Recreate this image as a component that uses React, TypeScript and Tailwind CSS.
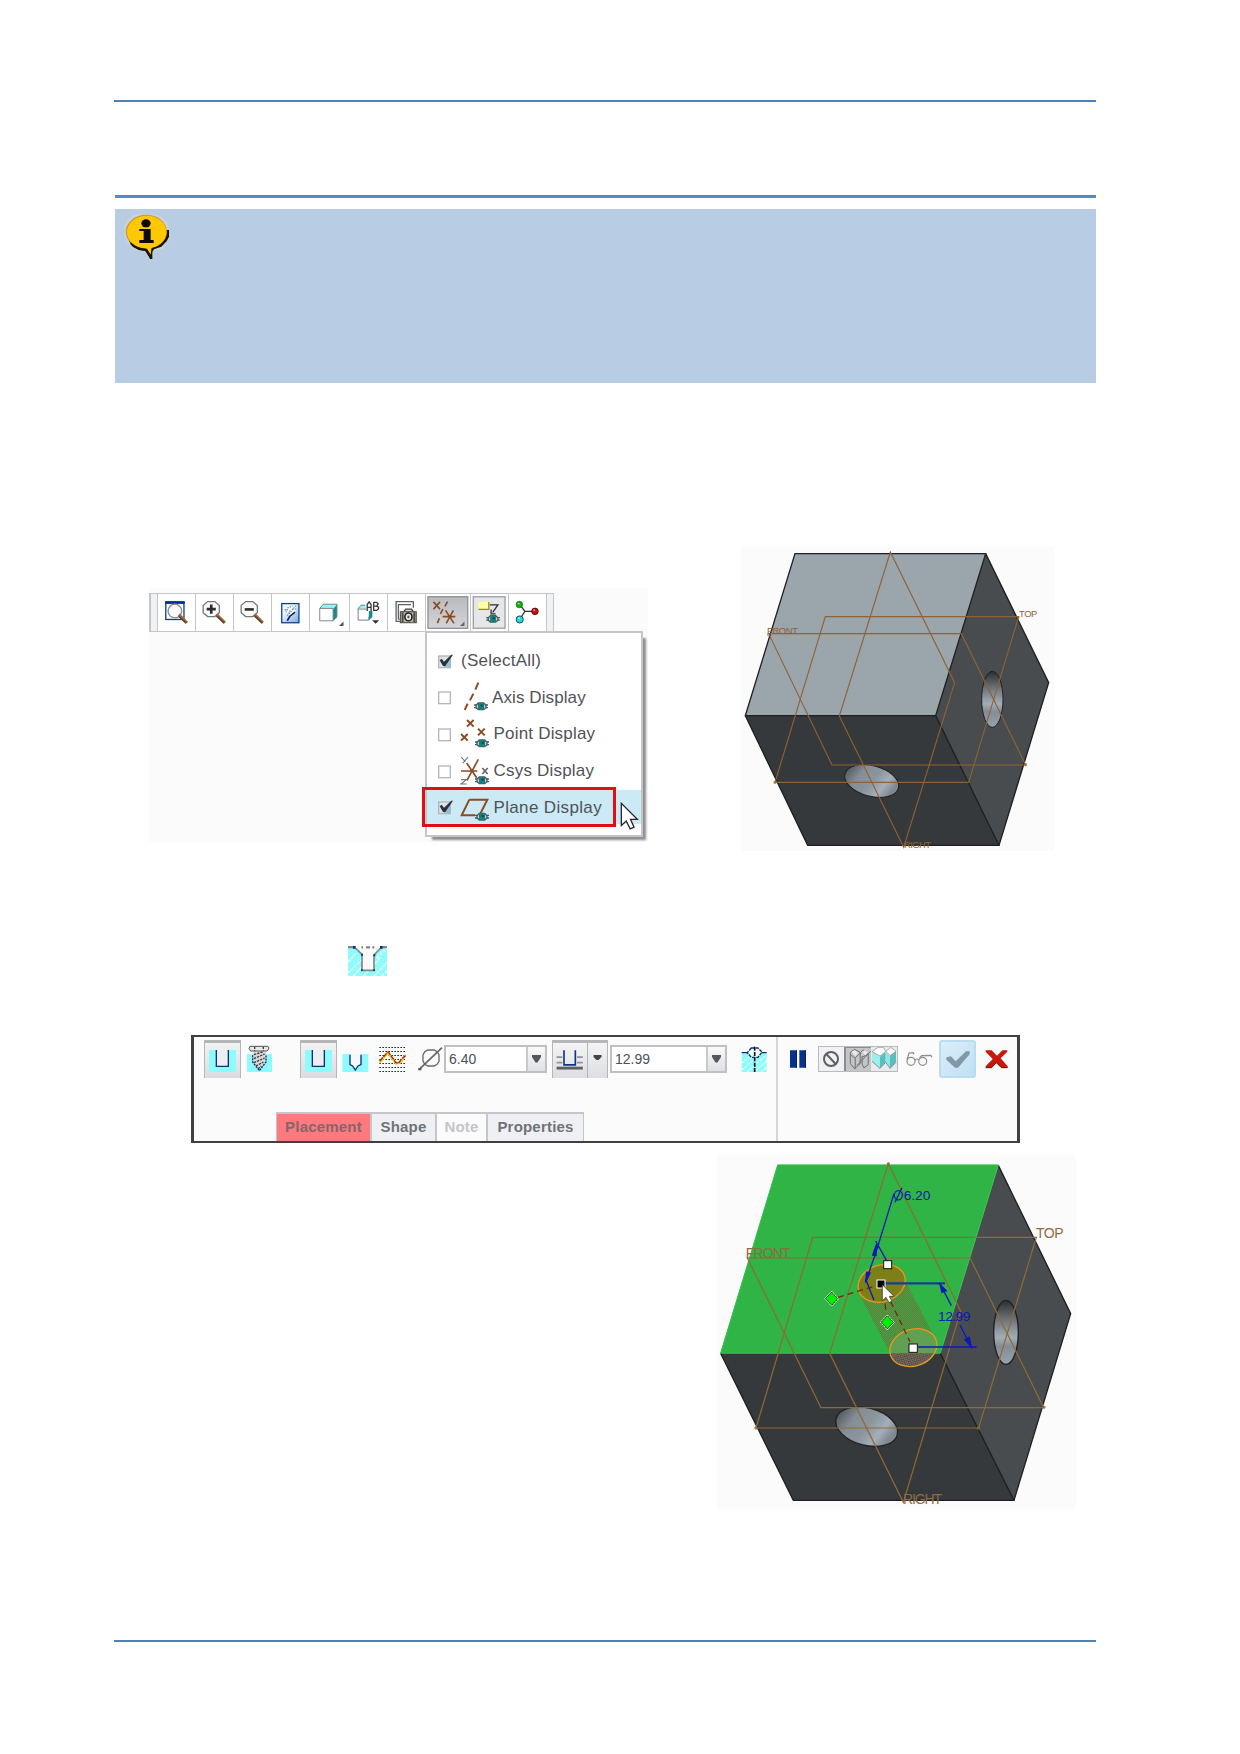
import React from "react";

const SANS = "font-['Liberation_Sans',Arial,sans-serif]";

function Glyph({ w, h, vb, className = "", children }: { w: number; h: number; vb: string; className?: string; children: React.ReactNode }) {
  return (
    <svg width={w} height={h} viewBox={vb} className={`block shrink-0 ${className}`} fill="none">
      {children}
    </svg>
  );
}

function Eye({ x, y }: { x: number; y: number }) {
  return (
    <g transform={`translate(${x} ${y})`}>
      <path d="M-21 -4h6M-21 4h6M15 -4h6M15 4h6" stroke="#555" strokeWidth="4" />
      <path d="M-15 -3L-8 -10H8L15 -3V4L8 10H-8L-15 4Z" fill="#c3cccc" stroke="#4a5555" strokeWidth="4" />
      <rect x="-9" y="-10" width="18" height="20" fill="#158080" />
      <rect x="-1" y="-5" width="6" height="6" fill="#0b3f48" />
    </g>
  );
}

function Cursor({ x, y, s = 1 }: { x: number; y: number; s?: number }) {
  return (
    <path
      transform={`translate(${x} ${y}) scale(${s})`}
      d="M0 0V68L15 54L27 78L39 73L28 49H49Z"
      fill="#fff"
      stroke="#26262e"
      strokeWidth="4"
    />
  );
}

function InfoIcon() {
  return (
    <Glyph w={48} h={48} vb="69 399 144 144">
      <path d="M100 406L120 401H158L182 408L203 428L207 450V480L190 506L158 516L154 537H148L140 518L108 511L85 492L73 466V438L84 418Z" fill="#d8d6cc" opacity="0.6" />
      <path d="M203 450H207V470L200 484L184 500L162 508L157 516V537H150L147 524L138 514L116 510L98 500L86 482L140 480L198 450Z" fill="#16140a" />
      <ellipse cx="139" cy="455" rx="62" ry="51" fill="#c09a4a" />
      <ellipse cx="140" cy="456" rx="59" ry="49" fill="#ffc800" />
      <path d="M136 498L152 524L155 500Z" fill="#ffc800" />
      <path d="M92 490Q112 508 136 509L152 534" stroke="#171405" strokeWidth="5" />
      <ellipse cx="138" cy="430" rx="14" ry="12" fill="#0c0a02" />
      <path d="M118 447H152V480H161V489H118V480H131V453H118Z" fill="#0c0a02" />
    </Glyph>
  );
}

function Magnifier({ cx, children }: { cx: number; children?: React.ReactNode }) {
  return (
    <g>
      <path d={`M${cx - 11} 65H${cx + 11}L${cx + 25} 77V99L${cx + 11} 111H${cx - 11}L${cx - 25} 99V77Z`} fill="#fafafa" stroke="#777" strokeWidth="4" />
      {children}
      <path d={`M${cx + 16} 104L${cx + 42} 130`} stroke="#9b6a48" strokeWidth="9" />
      <path d={`M${cx + 16} 109L${cx + 40} 131`} stroke="#6d3c24" strokeWidth="5" />
    </g>
  );
}

const CELL = "border-l border-[#c3c5c9] h-[39px] shrink-0";

function ViewToolbar() {
  return (
    <div className="flex w-[405px] h-[39px] bg-white border-y border-[#c3c5c9] items-center">
      <div className="w-[8.2px] h-full border-l-2 border-[#c3c5c9] bg-[#f0f1f3]" />
      <Glyph w={38} h={39} vb="53 40 114 117" className={CELL}>
        <rect x="77" y="66" width="56" height="54" fill="#fff" stroke="#093a8c" strokeWidth="4" />
        <rect x="75" y="64" width="60" height="8" fill="#06307c" />
        <ellipse cx="105" cy="94" rx="21" ry="21" fill="#fafafa" stroke="#8a8a8a" strokeWidth="4" />
        <path d="M117 105L142 130" stroke="#9b6a48" strokeWidth="9" />
        <path d="M117 110L140 131" stroke="#6d3c24" strokeWidth="5" />
      </Glyph>
      <Glyph w={38} h={39} vb="167 40 114 117" className={CELL}>
        <Magnifier cx={214}>
          <path d="M200 88H228M214 74V102" stroke="#2b2b2b" strokeWidth="8" />
        </Magnifier>
      </Glyph>
      <Glyph w={38} h={39} vb="281 40 114 117" className={CELL}>
        <Magnifier cx={328}>
          <path d="M314 89H342" stroke="#2b2b2b" strokeWidth="8" />
        </Magnifier>
      </Glyph>
      <Glyph w={38} h={39} vb="395 40 114 117" className={CELL}>
        <defs>
          <linearGradient id="repaint" x1="0" y1="0" x2="1" y2="1">
            <stop offset="0.3" stopColor="#f2f8fc" />
            <stop offset="1" stopColor="#79a9dc" />
          </linearGradient>
        </defs>
        <rect x="425" y="71" width="53" height="59" fill="url(#repaint)" stroke="#0b4191" strokeWidth="4" />
        <path d="M438 98L445 84L458 78L470 84L466 100L450 108Z" fill="#fff" />
        <path d="M442 124L450 110L466 97" stroke="#10204e" strokeWidth="5" />
        <path d="M438 98L444 84L458 79M448 102L468 78M442 108L452 92M458 88L470 88M434 90H444" stroke="#6d95b4" strokeWidth="4" strokeDasharray="4 3" />
      </Glyph>
      <Glyph w={39.7} h={39} vb="509 40 119 117" className={CELL}>
        <path d="M539 84L550 73H592L580 86H539Z" fill="#8ff5f5" />
        <path d="M580 88L592 74V112L580 124Z" fill="#158b8b" />
        <path d="M539 86H580V124H539ZM539 86L550 73H592V112L580 124" stroke="#7d8588" strokeWidth="3" />
        <path d="M612 126V140H598Z" fill="#555" />
      </Glyph>
      <Glyph w={38} h={39} vb="28 40 114 117" className={CELL}>
        <path d="M53 86L62 75H76V86Z" fill="#8ff5f5" />
        <path d="M86 94H97V112L86 122Z" fill="#158b8b" />
        <path d="M74 76H62L53 86V122H86V112M53 88H78" stroke="#777f84" strokeWidth="3" />
        <path d="M81 94V74L87 66L93 74V94M81 83H93M101 66V92H110L116 87V82L110 79H101M101 67H110L115 72L110 79" stroke="#333" strokeWidth="4" />
        <path d="M96 122H118L107 133Z" fill="#333" />
      </Glyph>
      <Glyph w={38} h={39} vb="142 40 114 117" className={CELL}>
        <path d="M220 84V65H167V126H180M213 74H174V119H178" stroke="#5d6468" strokeWidth="4" />
        <rect x="180" y="96" width="49" height="34" fill="#bdbba8" stroke="#3c3c3a" strokeWidth="3" />
        <path d="M192 94L197 88H214L219 94" fill="#dcdcd4" stroke="#3c3c3a" strokeWidth="4" />
        <path d="M187 98V128M223 98V128" stroke="#4c4b44" strokeWidth="6" />
        <ellipse cx="205" cy="112" rx="11" ry="12" fill="#e8e8e8" stroke="#222" strokeWidth="5" />
        <rect x="202" y="108" width="6" height="8" fill="#555" />
      </Glyph>
      <Glyph w={45} h={39} vb="256 40 135 117" className={CELL}>
        <defs>
          <linearGradient id="pressed" x1="0" y1="0" x2="0" y2="1">
            <stop offset="0" stopColor="#b9babd" />
            <stop offset="1" stopColor="#d4d5d8" />
          </linearGradient>
        </defs>
        <rect x="262" y="50" width="122" height="97" fill="url(#pressed)" stroke="#8f9195" strokeWidth="4" />
        <path d="M279 66L299 88M299 66L279 88M322 65L314 80M308 88L300 103M297 116L291 131M307 111H346M316 92L342 132M340 92L318 132" stroke="#8a4c22" strokeWidth="5" />
        <path d="M374 126V140H360Z" fill="#666" />
      </Glyph>
      <Glyph w={38.3} h={39} vb="391 40 115 117" className={CELL}>
        <rect x="398" y="50" width="98" height="97" fill="#e6e7e9" stroke="#9b9da1" strokeWidth="4" />
        <path d="M414 66H446V89H414Z" fill="#ffff9c" />
        <path d="M414 89H446V66" stroke="#8e8a28" strokeWidth="4" />
        <path d="M449 75H474L458 98M453 89V103H467" stroke="#2c2c2c" strokeWidth="4" />
        <Eye x={459} y={118} />
      </Glyph>
      <Glyph w={38} h={39} vb="506 40 114 117" className={CELL}>
        <path d="M540 75L555 95L540 118M555 95H582" stroke="#333" strokeWidth="4" />
        <circle cx="538" cy="74" r="10" fill="#10b010" stroke="#0a5a0a" strokeWidth="2" />
        <circle cx="539" cy="120" r="11" fill="#20d8e0" stroke="#0a4a52" strokeWidth="3" />
        <circle cx="586" cy="95" r="10" fill="#d80f0f" stroke="#4a0808" strokeWidth="3" />
        <path d="M533 69h5v4h-5zM534 114h5v4h-5zM581 89h5v4h-5z" fill="#fff" opacity="0.8" />
      </Glyph>
      <div className="flex-1 h-full border-x border-[#c3c5c9] bg-[#f0f1f3]" />
    </div>
  );
}

function CheckBox({ checked }: { checked?: boolean }) {
  return (
    <Glyph w={18} h={18} vb="288 -27 54 54">
      <rect x="296" y="-15" width="35" height="35" fill={checked ? "#dde3e8" : "#fff"} stroke="#b4b6ba" strokeWidth="4" />
      {checked && <path d="M310 18L330 -12V18Z" fill="#5aaed8" opacity="0.6" />}
      {checked && <path d="M299 -2L305 -7L312 2L334 -19H339L316 15H309Z" fill="#2c3238" />}
    </Glyph>
  );
}

const axisIcon = (
  <>
    <path d="M415 -43L406 -22M400 -10L390 10M383 20L374 39" stroke="#8a4c22" strokeWidth="6" />
    <Eye x={423} y={28} />
  </>
);
const pointIcon = (
  <>
    <path d="M381 -42L401 -22M401 -42L381 -22M414 -16L434 4M434 -16L414 4M363 0L383 20M383 0L363 20" stroke="#8a4c22" strokeWidth="6" />
    <Eye x={426} y={28} />
  </>
);
const csysIcon = (
  <>
    <path d="M364 -42L374 -30L384 -42M376 -30L368 -24M363 26H379L363 39H380" stroke="#777" strokeWidth="3.5" />
    <path d="M363 0H412M415 -35L381 28M380 -24L410 20" stroke="#8a4c22" strokeWidth="5" />
    <path d="M427 -9L443 9M443 -9L427 9" stroke="#666" strokeWidth="5" />
    <Eye x={426} y={28} />
  </>
);
const planeIcon = (
  <>
    <path d="M388 -22H442L420 22M405 25H365L388 -22" stroke="#8a4c22" strokeWidth="6" />
    <Eye x={426} y={29} />
  </>
);

function MenuRow({ label, icon, checked, active, text }: { label: string; icon?: React.ReactNode; checked?: boolean; active?: boolean; text: string }) {
  return (
    <div className="h-[36.6px] flex items-center">
      <div className={`flex items-center w-full pl-[9.5px] h-[34px] ${active ? "bg-[#cce9f6]" : ""}`}>
        <CheckBox checked={checked} />
        <div className="w-[6px] shrink-0" />
        {icon && (
          <Glyph w={31} h={36} vb="360 -54 93 108" className="mr-px">
            {icon}
          </Glyph>
        )}
        <span className={`whitespace-nowrap text-[17px] leading-none text-[#505258] ${text}`}>{label}</span>
      </div>
    </div>
  );
}

function DisplayMenu() {
  return (
    <div className="relative ml-[275.5px] -mt-px w-[218px] h-[206px] border-2 border-[#c3c5c9] bg-white pt-[9.5px] shadow-[5px_5px_2px_-2px_#8f8f92]">
      <MenuRow label="(SelectAll)" checked text="pl-px tracking-[0.25px]" />
      <MenuRow label="Axis Display" icon={axisIcon} text="tracking-[0.1px]" />
      <MenuRow label="Point Display" icon={pointIcon} text="pl-[1.5px] tracking-[0.2px]" />
      <MenuRow label="Csys Display" icon={csysIcon} text="pl-[1.5px] tracking-[0.2px]" />
      <MenuRow label="Plane Display" icon={planeIcon} checked active text="pl-[1.5px] tracking-[0.35px]" />
      <div className="absolute -left-[4.5px] top-[154px] w-[194px] h-[40px] border-[3px] border-[#df1014]" />
      <Glyph w={20} h={30} vb="-4 -4 60 90" className="absolute left-[193px] top-[169px]">
        <Cursor x={0} y={0} s={0.98} />
      </Glyph>
    </div>
  );
}

function GrayBlock() {
  return (
    <Glyph w={313} h={304} vb="33 21 939 912" className="ml-[93px] bg-[#fbfbfb]">
      <defs>
        <linearGradient id="sideHole" x1="0" y1="0" x2="0" y2="1">
          <stop offset="0.02" stopColor="#303335" />
          <stop offset="0.35" stopColor="#787e84" />
          <stop offset="0.58" stopColor="#a3adb7" />
          <stop offset="0.72" stopColor="#848d95" />
          <stop offset="1" stopColor="#98a2aa" />
        </linearGradient>
        <linearGradient id="frontHole" x1="0" y1="0" x2="1" y2="0.25">
          <stop offset="0" stopColor="#43464a" />
          <stop offset="0.35" stopColor="#858e96" />
          <stop offset="0.6" stopColor="#8b959d" />
          <stop offset="0.82" stopColor="#a5afba" />
          <stop offset="1" stopColor="#7f888f" />
        </linearGradient>
      </defs>
      <path d="M195 41H767L617 527H46Z" fill="#9ba5ac" />
      <path d="M46 527H617L807 916H233Z" fill="#36393b" />
      <path d="M767 41L956 428L807 916L617 527Z" fill="#484c4f" />
      <path d="M195 41H767L617 527H46ZM46 527L233 916H807L617 527M767 41L956 428L807 916" stroke="#1d1f21" strokeWidth="4" />
      <ellipse cx="787" cy="478" rx="32" ry="84" fill="url(#sideHole)" stroke="#1f2123" strokeWidth="3" />
      <ellipse cx="425" cy="723" rx="83" ry="46" transform="rotate(15 425 723)" fill="url(#frontHole)" stroke="#1f2123" strokeWidth="3" />
      <g stroke="#8f6235" strokeWidth="3.3">
        <path d="M481 36L674 428L521 922L328 528Z" />
        <path d="M286 230H866L716 727H135Z" />
        <path d="M116 281H694L887 675H306Z" />
        <path d="M863 231h6M132 724h6v6h-6zM884 671h6v6h-6zM113 281h6v6h-6z" strokeWidth="2" />
      </g>
      <g fill="#8f6235" fontFamily="Liberation Sans, sans-serif" fontSize="28">
        <text x="111" y="282" textLength="93">FRONT</text>
        <text x="867" y="230" textLength="55">TOP</text>
        <text x="522" y="924" textLength="81">RIGHT</text>
      </g>
    </Glyph>
  );
}

function GreenBlock() {
  return (
    <Glyph w={359} h={354} vb="21 30 1077 1062" className="ml-[603px] mt-[12px] bg-[#fbfbfb]">
      <defs>
        <pattern id="mesh" width="6" height="6" patternUnits="userSpaceOnUse">
          <rect width="6" height="6" fill="#58983e" />
          <rect width="3" height="3" fill="#5b8045" />
          <rect x="3" y="3" width="3" height="3" fill="#478b3c" />
        </pattern>
        <pattern id="darkMesh" width="6" height="6" patternUnits="userSpaceOnUse">
          <rect width="6" height="6" fill="#75675b" />
          <rect width="3" height="3" fill="#3b3b38" />
        </pattern>
        <clipPath id="below">
          <rect x="500" y="625" width="220" height="60" />
        </clipPath>
      </defs>
      <path d="M203 59H865L691 624H32Z" fill="#2fb445" />
      <path d="M32 625H691L912 1066H250Z" fill="#36393b" />
      <path d="M865 61L1082 506L912 1066L691 625Z" fill="#484c4f" />
      <path d="M32 625L250 1066H912L691 625M865 61L1082 506L912 1066" stroke="#1d1f21" strokeWidth="4" />
      <path d="M203 60H865L691 624H32Z" stroke="#35c04c" strokeWidth="3" />
      <ellipse cx="888" cy="562" rx="37" ry="96" fill="url(#sideHole)" stroke="#1f2123" strokeWidth="4" />
      <ellipse cx="470" cy="845" rx="95" ry="56" transform="rotate(15 470 845)" fill="url(#frontHole)" stroke="#1f2123" strokeWidth="4" />
      <path d="M452 455L582 400L680 590L640 624L543 630Z" fill="url(#mesh)" />
      <ellipse cx="610" cy="608" rx="72" ry="55" transform="rotate(-18 610 608)" fill="#61a052" />
      <g clipPath="url(#below)">
        <ellipse cx="610" cy="608" rx="72" ry="55" transform="rotate(-18 610 608)" fill="url(#darkMesh)" />
      </g>
      <ellipse cx="515" cy="415" rx="72" ry="55" transform="rotate(-18 515 415)" fill="#7d8016" />
      <g stroke="#8f6a35" strokeWidth="3.6">
        <path d="M535 56L752 498L580 1072L359 625Z" />
        <path d="M308 277H979L806 849H138Z" />
        <path d="M112 339H780L1001 788H333Z" />
        <path d="M135 846h6v6h-6zM999 785h6v4h-6zM532 54h6v4h-6zM803 846h6v6h-6z" strokeWidth="3" />
      </g>
      <g stroke="#e8981c" strokeWidth="4">
        <ellipse cx="515" cy="415" rx="72" ry="55" transform="rotate(-18 515 415)" />
        <ellipse cx="610" cy="608" rx="72" ry="55" transform="rotate(-18 610 608)" />
      </g>
      <g fill="#8f6a42" fontFamily="Liberation Sans, sans-serif" fontSize="42">
        <text x="107" y="339" textLength="135">FRONT</text>
        <text x="978" y="279" textLength="83">TOP</text>
        <text x="579" y="1076" textLength="117">RIGHT</text>
      </g>
      <path d="M384 457L498 422M525 476L529 505M542 470L600 590" stroke="#7c2408" strokeWidth="4" strokeDasharray="18 12" />
      <g stroke="#0c18b8" strokeWidth="4">
        <path d="M552 146L497 325L466 412M497 288L531 349M468 405L492 466" />
        <path d="M526 415H705" strokeWidth="7" stroke="#123ca0" />
        <path d="M622 606H800M692 420L724 482M750 540L784 606" />
        <path d="M500 297L488 330L498 332ZM467 412L470 382L480 384ZM690 418L696 442L709 437ZM784 606L765 584L778 577Z" fill="#0c18b8" />
        <ellipse cx="565" cy="151" rx="12" ry="14" strokeWidth="3.5" />
        <path d="M576 128L555 172" />
      </g>
      <g fill="#0c18b8" fontFamily="Liberation Sans, sans-serif" fontSize="41">
        <text x="581" y="165" textLength="80">6.20</text>
        <text x="684" y="527" textLength="97">12.99</text>
      </g>
      <path d="M365 441L384 461L365 481L346 461ZM532 512L551 532L532 552L513 532Z" stroke="#fff" strokeWidth="4" />
      <path d="M365 441L384 461L365 481L346 461ZM532 512L551 532L532 552L513 532Z" fill="#00f000" stroke="#0c2a0c" strokeWidth="3" />
      <path d="M365 439L386 461L365 483L344 461ZM532 510L553 532L532 554L511 532Z" stroke="#fff" strokeWidth="2.5" strokeDasharray="4 4" />
      <rect x="501" y="405" width="24" height="24" fill="#000" stroke="#fff" strokeWidth="3" />
      <rect x="521" y="347" width="24" height="24" fill="#fff" stroke="#111" strokeWidth="3" />
      <rect x="597" y="597" width="25" height="25" fill="#fff" stroke="#111" strokeWidth="3" />
      <path transform="translate(517 419)" d="M0 0V48L11 38L20 54L29 49L21 35H35Z" fill="#fff" stroke="#222" strokeWidth="2" />
    </Glyph>
  );
}

function HoleIcon() {
  return (
    <Glyph w={39} h={30} vb="504 48 117 90" className="ml-[234px] mt-[95px]">
      <rect x="504" y="54" width="117" height="84" fill="#8efcfc" />
      <path d="M504 96L530 68M504 130L545 89M520 138L560 96M550 138L600 84M582 138L621 98M606 138L621 122M590 84L621 54" stroke="#e9ffff" strokeWidth="5" strokeDasharray="9 4" />
      <path d="M524 48L546 75V121H582V75L604 48Z" fill="#fafafa" />
      <path d="M504 51H520M604 51H621M544 52H549M558 52H570M577 52H583" stroke="#858585" strokeWidth="7" />
      <path d="M526 54L546 73V121H582V75L602 54" stroke="#858585" strokeWidth="5" />
      <path d="M519 48h8v8h-8zM600 48h8v8h-8zM543 71h6v6h-6zM580 73h6v6h-6zM543 118h5v5h-5zM580 118h5v5h-5z" fill="#0c2f7c" />
    </Glyph>
  );
}

function ToggleHole({ className }: { className: string }) {
  return (
    <div className={`w-[37px] h-[38px] shrink-0 border-t-[3px] border-x border-[#b5b6b8] bg-linear-to-b from-[#f2f2f4] to-[#dcdde1] flex ${className}`}>
      <Glyph w={27} h={22} vb="87 360 81 66" className="ml-[4px] mt-[7px]">
        <rect x="87" y="360" width="81" height="66" fill="#8efcfc" />
        <path d="M109 360V409H145V360Z" fill="#eceef2" />
        <path d="M109 360V409H145V360" stroke="#0d2f7a" strokeWidth="4" />
      </Glyph>
    </div>
  );
}

function Combo({ value, className }: { value: string; className: string }) {
  return (
    <div className={`h-[28px] shrink-0 flex border-2 border-[#bfc0c3] bg-white ${className}`}>
      <div className="flex-1 pl-[3px] flex items-center text-[14px] leading-none text-[#4e5056]">{value}</div>
      <div className="w-[19px] border-l-2 border-[#c9cacc] bg-linear-to-b from-[#fafafa] to-[#dfe0e3] flex items-center justify-center">
        <Glyph w={9} h={8} vb="0 0 9 8">
          <path d="M0 0H9V2L5.5 7.5H3.5L0 2Z" fill="#55575c" />
        </Glyph>
      </div>
    </div>
  );
}

function Dashboard() {
  return (
    <div className="ml-[77px] mt-[59px] w-[829px] h-[108px] bg-[#fbfbfb] border-y-2 border-l-[3px] border-r-[3px] border-[#404042] flex">
      <div className="w-[583.5px] shrink-0 border-r-2 border-[#d5d6d8] flex flex-col justify-between pt-[3px]">
        <div className="flex items-center h-[38px]">
          <ToggleHole className="ml-[10px]" />
          <Glyph w={27} h={38} vb="198 330 81 114" className="ml-[5px]">
            <path d="M201 372H276V426H201Z" fill="#8efcfc" />
            <path d="M218 364H258V396L238 422L218 396Z" fill="#d9d9d9" />
            <path d="M210 349H264L267 354L262 363H212L207 355Z" fill="#e8e8e8" stroke="#555" strokeWidth="3" />
            <path d="M218 376V396L238 422L258 396V376" stroke="#0d2f7a" strokeWidth="4" strokeDasharray="6 3" />
            <path d="M224 350V362M250 350V362M222 374L248 366M222 386L254 372M222 398L254 384M228 408L250 396M234 416L244 408" stroke="#3c3c3c" strokeWidth="4" strokeDasharray="7 3" />
          </Glyph>
          <ToggleHole className="ml-[27px]" />
          <Glyph w={27} h={38} vb="485 330 81 114" className="ml-[5px]">
            <path d="M486 372H564V426H486Z" fill="#8efcfc" />
            <path d="M509 372V405L519 411L525 420L531 411L542 405V372Z" fill="#f4f8fa" />
            <path d="M509 374V404L517 408L525 420L533 408L542 404V374" stroke="#0d2f7a" strokeWidth="4" />
          </Glyph>
          <Glyph w={27} h={38} vb="596 330 81 114" className="ml-[10px]">
            <path d="M597 352.500H676M597 364.500H676M597 376.500H676M597 388.500H676M597 400.500H676M597 412.500H676M597 424.500H676" stroke="#12306c" strokeWidth="3" strokeDasharray="5 4" />
            <path d="M598 398L622 368L648 401L662 396L676 374" stroke="#f3cc38" strokeWidth="7" />
            <path d="M598 393L618 371L624 366L646 397L654 400L664 386L676 377" stroke="#a8200c" strokeWidth="4" strokeDasharray="14 3" />
          </Glyph>
          <Glyph w={25} h={38} vb="53 60 75 114" className="ml-[12px]">
            <path d="M82 90H102L111 96L116 105V124L111 132L102 138H82L73 132L68 123V105L73 96Z" stroke="#6a6a6a" strokeWidth="4" />
            <path d="M56 149L125 83" stroke="#666" strokeWidth="5" />
            <path d="M54 144h9v7h-9z" fill="#555" />
          </Glyph>
          <Combo value="6.40" className="ml-px w-[102.5px]" />
          <div className="ml-[5.5px] w-[56px] h-[38px] shrink-0 border-t-[3px] border-x border-[#b5b6b8] bg-linear-to-b from-[#f5f5f6] to-[#dcdde1] flex">
            <Glyph w={35} h={35} vb="457 69 105 105" className="border-r border-[#b5b6b8]">
              <path d="M468 111H486M531 111H549M468 128H486M531 128H549" stroke="#939393" strokeWidth="6" />
              <path d="M468 145H549" stroke="#606060" strokeWidth="9" />
              <path d="M491 90V135H526V90" stroke="#0d3488" strokeWidth="5" />
            </Glyph>
            <Glyph w={19} h={35} vb="0 0 19 35">
              <path d="M5.500 12H13.500V14L10.500 17H8.500L5.500 14Z" fill="#444" />
            </Glyph>
          </div>
          <Combo value="12.99" className="ml-[2px] w-[117px]" />
          <Glyph w={26} h={38} vb="61 60 78 114" className="ml-[14px]">
            <path d="M63 100H138V156H63Z" fill="#8efcfc" />
            <path d="M63 130L88 108M63 150L96 122M80 156L100 138M106 152L138 122M122 156L138 142M108 130L134 108" stroke="#e9ffff" strokeWidth="4" strokeDasharray="8 4" />
            <path d="M92 84H112L124 96L112 112H92L80 98Z" fill="#f2fcfc" stroke="#0b2f6c" strokeWidth="4" strokeDasharray="10 3" />
            <path d="M63 98H80M124 98H138" stroke="#0b2f6c" strokeWidth="4" />
            <path d="M102 80V156" stroke="#111" strokeWidth="5" strokeDasharray="12 4" />
          </Glyph>
        </div>
        <div className="ml-[82px] flex h-[29px] text-[15px] font-bold tracking-[0.2px] text-[#707279] border-t-2 border-l border-[#c5c6c9] w-[308px]">
          <div className="w-[95px] flex items-center justify-center bg-[#ff7a7e] text-[#86646c] border-r-2 border-[#c5c6c9]">Placement</div>
          <div className="w-[65px] flex items-center justify-center bg-[#eef0f3] border-r-2 border-[#c5c6c9]">Shape</div>
          <div className="w-[51px] flex items-center justify-center text-[#c4c5c9] border-r-2 border-[#c5c6c9]">Note</div>
          <div className="flex-1 flex items-center justify-center bg-[#eef0f3] border-r border-[#c5c6c9]">Properties</div>
        </div>
      </div>
      <div className="flex items-center h-[38px] mt-[3px]">
        <Glyph w={16} h={38} vb="210 60 48 114" className="ml-[12.500px]">
          <path d="M210 91H231V143H210ZM238 91H258V143H238Z" fill="#07318a" />
          <path d="M228 91h3v52h-3zM255 91h3v52h-3z" fill="#10204e" />
        </Glyph>
        <div className="ml-[12px] flex w-[80px] h-[26px] border border-[#b9babd]">
          <Glyph w={25} h={24} vb="297 81 75 72" className="bg-[#f0f1f3]">
            <circle cx="333" cy="117" r="21" stroke="#5c5f64" strokeWidth="6" />
            <path d="M319 102L347 132" stroke="#5c5f64" strokeWidth="6" />
          </Glyph>
          <Glyph w={27} h={24} vb="372 81 81 72" className="bg-[#c4c5c7] border-l-2 border-t border-[#8b8d90]">
            <path d="M386 94L400 84L418 94V130L400 147L386 130ZM402 112L428 86L444 100V134L430 144L424 132V106M386 100L402 114V146M424 110L444 98M408 136L452 90" stroke="#66686b" strokeWidth="3" />
            <path d="M390 92L400 87L412 95L402 106ZM424 92L434 87L444 95L434 104Z" fill="#e8e8e6" />
          </Glyph>
          <Glyph w={26} h={24} vb="453 81 78 72" className="bg-[#e9eaec]">
            <path d="M456 95L480 110V144L456 124Z" fill="#9eeeee" />
            <path d="M480 110L497 96V126L480 144ZM510 108L528 94V126L510 144Z" fill="#58bebe" />
            <path d="M497 96L510 108V144L497 126Z" fill="#8fe6e6" />
            <path d="M456 95L474 82H490L497 94L480 108ZM498 94L512 82L528 94L510 107Z" fill="#fdfdfd" stroke="#888" strokeWidth="2" />
            <path d="M456 124L480 145L497 127L510 145L528 127" stroke="#55696b" strokeWidth="2" />
          </Glyph>
        </div>
        <Glyph w={27} h={38} vb="557 60 81 114" className="ml-[8px]">
          <circle cx="572" cy="124" r="12" stroke="#8b8b8b" strokeWidth="3.500" />
          <circle cx="607" cy="124" r="12" stroke="#8b8b8b" strokeWidth="3.500" />
          <path d="M584 120Q590 114 595 120M560 119L566 99L579 98L581 103M598 114L604 107L632 106L635 112" stroke="#8b8b8b" strokeWidth="3.500" />
        </Glyph>
        <div className="ml-[6px] w-[37px] h-[38px] rounded-[3px] border-2 border-[#bcddef] bg-linear-to-br from-[#dceef8] to-[#bfe0f3] flex items-center justify-center">
          <Glyph w={24} h={19} vb="674 90 72 57">
            <path d="M675 112L689 109L703 124L734 94H745V103L710 143H701L675 119Z" fill="#8098a8" />
          </Glyph>
        </div>
        <Glyph w={23} h={38} vb="793 60 69 114" className="ml-[9px]">
          <path d="M795 91H813L829 107L845 91H860V95L840 115L861 139V143H842L827 128L813 143H795V139L816 117L795 95Z" fill="#c8180c" />
          <path d="M795 143H813L827 128L842 143H861" stroke="#6c120c" strokeWidth="3" />
        </Glyph>
      </div>
    </div>
  );
}

export default function App() {
  return (
    <main className={`w-[1240px] h-[1754px] overflow-hidden bg-white pl-[114px] pt-[100px] ${SANS}`}>
      <div className="w-[982px] h-[2px] bg-[#4f81b5]" />
      <div className="ml-px mt-[93px] w-[981px] h-[3px] bg-[#5888c6]" />
      <div className="ml-px mt-[11px] w-[981px] h-[174px] bg-[#b8cce3] pl-[8px] pt-[4px]">
        <InfoIcon />
      </div>
      <div className="mt-[164px] flex items-start">
        <div className="ml-[35px] mt-[41px] w-[499px] h-[254px] shrink-0 bg-[#fbfbfb] pt-[5px]">
          <ViewToolbar />
          <DisplayMenu />
        </div>
        <GrayBlock />
      </div>
      <HoleIcon />
      <Dashboard />
      <GreenBlock />
      <div className="mt-[131px] w-[982px] h-[2px] bg-[#4f81b5]" />
    </main>
  );
}
